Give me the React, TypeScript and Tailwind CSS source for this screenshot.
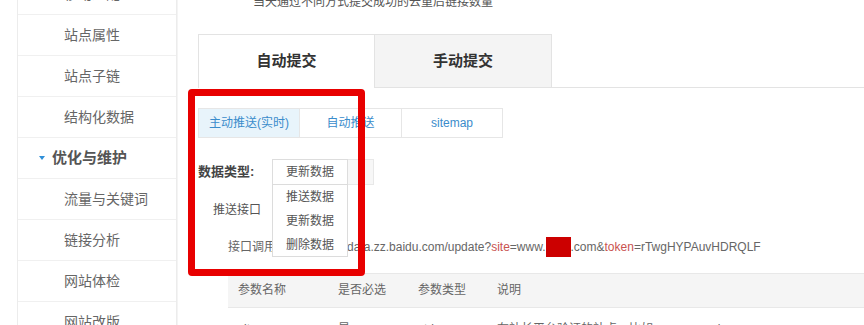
import React from "react";

const sideItems = [
  { label: "移动适配", head: false },
  { label: "站点属性", head: false },
  { label: "站点子链", head: false },
  { label: "结构化数据", head: false },
  { label: "优化与维护", head: true },
  { label: "流量与关键词", head: false },
  { label: "链接分析", head: false },
  { label: "网站体检", head: false },
  { label: "网站改版", head: false },
];

export default function App() {
  return (
    <div className="relative w-[864px] h-[325px] overflow-hidden bg-white flex font-['Liberation_Sans','Noto_Sans_CJK_SC',sans-serif] text-[#666]">
      {/* left margin */}
      <div className="w-[17px] shrink-0" />
      {/* sidebar */}
      <div className="w-[160px] shrink-0 border-l border-r border-[#ececec] mt-[-26px]">
        {sideItems.map((it) =>
          it.head ? (
            <div
              key={it.label}
              className="h-[41px] border-b border-[#f0f0f0] flex items-center pl-[21px]"
            >
              <span className="w-0 h-0 border-l-[3px] border-r-[3px] border-t-[4px] border-l-transparent border-r-transparent border-t-[#2f8fd8] mr-[7px]" />
              <span className="text-[15px] font-bold text-[#555]">{it.label}</span>
            </div>
          ) : (
            <div
              key={it.label}
              className="h-[41px] border-b border-[#f0f0f0] flex items-center pl-[46px] text-[14px] text-[#666]"
            >
              {it.label}
            </div>
          )
        )}
      </div>
      {/* main */}
      <div className="flex-1 border-l border-[#f4f4f4] pl-[20px]">
        <div className="mt-[-6px] leading-[16px] text-[12px] text-[#555] pl-[55px]">
          当天通过不同方式提交成功的去重后链接数量
        </div>
        {/* tabs */}
        <div className="flex mt-[24px]">
          <div className="w-[177px] h-[54px] border border-b-0 border-[#e3e3e3] bg-white flex items-center justify-center text-[15px] font-bold text-[#333]">
            自动提交
          </div>
          <div className="w-[177px] h-[54px] border-t border-r border-b border-[#e3e3e3] bg-[#f4f4f4] flex items-center justify-center text-[15px] font-bold text-[#333]">
            手动提交
          </div>
          <div className="flex-1 border-b border-[#e3e3e3]" />
        </div>
        {/* sub tabs */}
        <div className="flex mt-[20px]">
          <div className="w-[102px] h-[30px] border border-[#e6e6e6] bg-[#e8f4fb] flex items-center justify-center text-[12px] text-[#3a8ccb]">
            主动推送(实时)
          </div>
          <div className="w-[102px] h-[30px] border-t border-b border-r border-[#e6e6e6] bg-white flex items-center justify-center text-[12px] text-[#3a8ccb]">
            自动推送
          </div>
          <div className="w-[101px] h-[30px] border-t border-b border-r border-[#e6e6e6] bg-white flex items-center justify-center text-[12px] text-[#3a8ccb]">
            sitemap
          </div>
        </div>
        {/* data type */}
        <div className="flex items-center mt-[21px] h-[26px]">
          <div className="w-[74px] text-[13px] font-bold text-[#444]">数据类型:</div>
          <div className="relative flex">
            <div className="w-[76px] h-[26px] border border-[#ddd] bg-white flex items-center justify-center text-[12px] text-[#555]">
              更新数据
            </div>
            <div className="w-[26px] h-[26px] border-t border-r border-b border-[#e8e8e8] bg-[#f7f7f7] flex items-center justify-center text-[8px] text-[#ccc]">
              ▾
            </div>
            <div className="absolute z-10 left-0 top-[25px] w-[76px] h-[73px] bg-white border border-[#dcdcdc] text-[12px] text-[#555]">
              <div className="leading-[24px] pl-[13px]">推送数据</div>
              <div className="leading-[24px] pl-[13px]">更新数据</div>
              <div className="leading-[24px] pl-[13px]">删除数据</div>
            </div>
          </div>
        </div>
        <div className="mt-[16px] leading-[18px] pl-[15px] text-[12px] text-[#555]">推送接口</div>
        <div className="mt-[19px] leading-[18px] pl-[30px] text-[12px] text-[#666] whitespace-nowrap">
          接口调用地址：
          <span className="ml-[5px]">
            http://data.zz.baidu.com/update?
            <span className="text-[#c9534f]">site</span>=www.
            <span className="inline-block align-middle w-[25px] h-[20px] bg-[#cc0000] mt-[-2px]" />
            .com&amp;<span className="text-[#c9534f]">token</span>=rTwgHYPAuvHDRQLF
          </span>
        </div>
        {/* table */}
        <div className="mt-[16px] ml-[30px] text-[12px] text-[#666]">
          <div className="flex items-center h-[35px] bg-[#f5f5f5] border-t border-b border-[#e8e8e8] pl-[10px]">
            <div className="w-[100px]">参数名称</div>
            <div className="w-[80px]">是否必选</div>
            <div className="w-[79px]">参数类型</div>
            <div>说明</div>
          </div>
          <div className="flex items-center h-[42px] pl-[10px] whitespace-nowrap">
            <div className="w-[100px]">site</div>
            <div className="w-[80px]">是</div>
            <div className="w-[79px]">string</div>
            <div>在站长平台验证的站点，比如www.example.com</div>
          </div>
        </div>
      </div>
      {/* red annotation box */}
      <div className="absolute left-[188px] top-[89px] w-[177px] h-[187px] border-[7px] border-[#e80000] rounded-[4px] z-20" />
    </div>
  );
}
